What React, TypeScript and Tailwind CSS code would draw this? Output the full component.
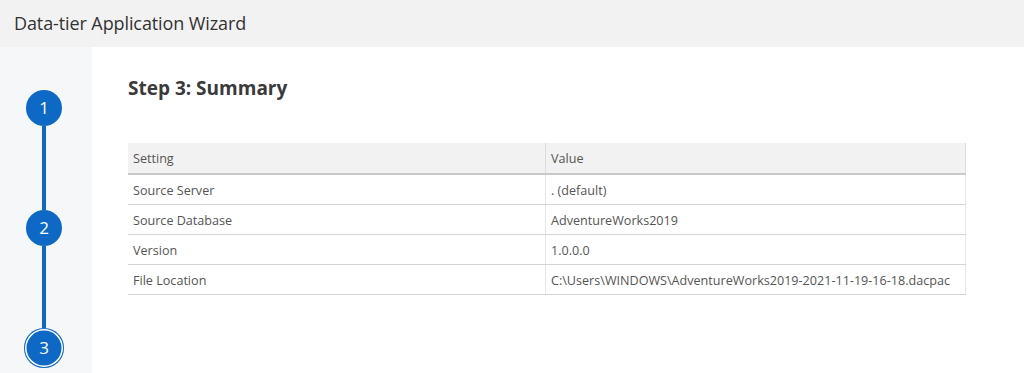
import React from "react";

const rows = [
  ["Source Server", ". (default)"],
  ["Source Database", "AdventureWorks2019"],
  ["Version", "1.0.0.0"],
  ["File Location", "C:\\Users\\WINDOWS\\AdventureWorks2019-2021-11-19-16-18.dacpac"],
];

export default function App() {
  return (
    <div
      className="w-[1024px] h-[373px] overflow-hidden bg-white flex flex-col"
      style={{ fontFamily: '"Open Sans", "Noto Sans", sans-serif' }}
    >
      <div className="h-[47px] shrink-0 bg-[#f2f2f2] flex items-center pl-[14px]">
        <span className="text-[18px] text-[#333333] tracking-[-0.1px]">Data-tier Application Wizard</span>
      </div>
      <div className="flex flex-1">
        <div className="w-[92px] shrink-0 bg-[#f6f7f9]">
          <div className="w-[88px] flex flex-col items-center pt-[43px]">
            <div className="w-[36px] h-[36px] rounded-full bg-[#0e68c5] text-white text-[17px] flex items-center justify-center">1</div>
            <div className="w-[4px] h-[84px] bg-[#0e68c5]" />
            <div className="w-[36px] h-[36px] rounded-full bg-[#0e68c5] text-white text-[17px] flex items-center justify-center">2</div>
            <div className="w-[4px] h-[82px] bg-[#0e68c5]" />
            <div className="w-[40px] h-[40px] rounded-full bg-[#0e68c5] text-white text-[17px] flex items-center justify-center shadow-[inset_0_0_0_1px_#0e68c5,inset_0_0_0_2.5px_#ffffff]">3</div>
          </div>
        </div>
        <div className="flex-1 pl-[36px] pt-[28px]">
          <h1 className="text-[19px] font-bold text-[#3a3a3a] leading-[26px]">Step 3: Summary</h1>
          <div className="mt-[42px] w-[838px] text-[12.6px] text-[#555555]">
            <div className="flex h-[32px] bg-[#f2f2f2] border-b-2 border-[#c9c9c9]">
              <div className="w-[418px] px-[5px] pt-[2px] flex items-center border-r border-[#dcdcdc]">Setting</div>
              <div className="flex-1 px-[5px] pt-[2px] flex items-center border-r border-[#dcdcdc]">Value</div>
            </div>
            {rows.map(([k, v]) => (
              <div key={k} className="flex h-[30px] border-b border-[#d4d4d4]">
                <div className="w-[418px] px-[5px] pt-[4px] flex items-center border-r border-[#e6e6e6]">{k}</div>
                <div className="flex-1 px-[5px] pt-[4px] flex items-center border-r border-[#e6e6e6]">{v}</div>
              </div>
            ))}
          </div>
        </div>
      </div>
    </div>
  );
}
